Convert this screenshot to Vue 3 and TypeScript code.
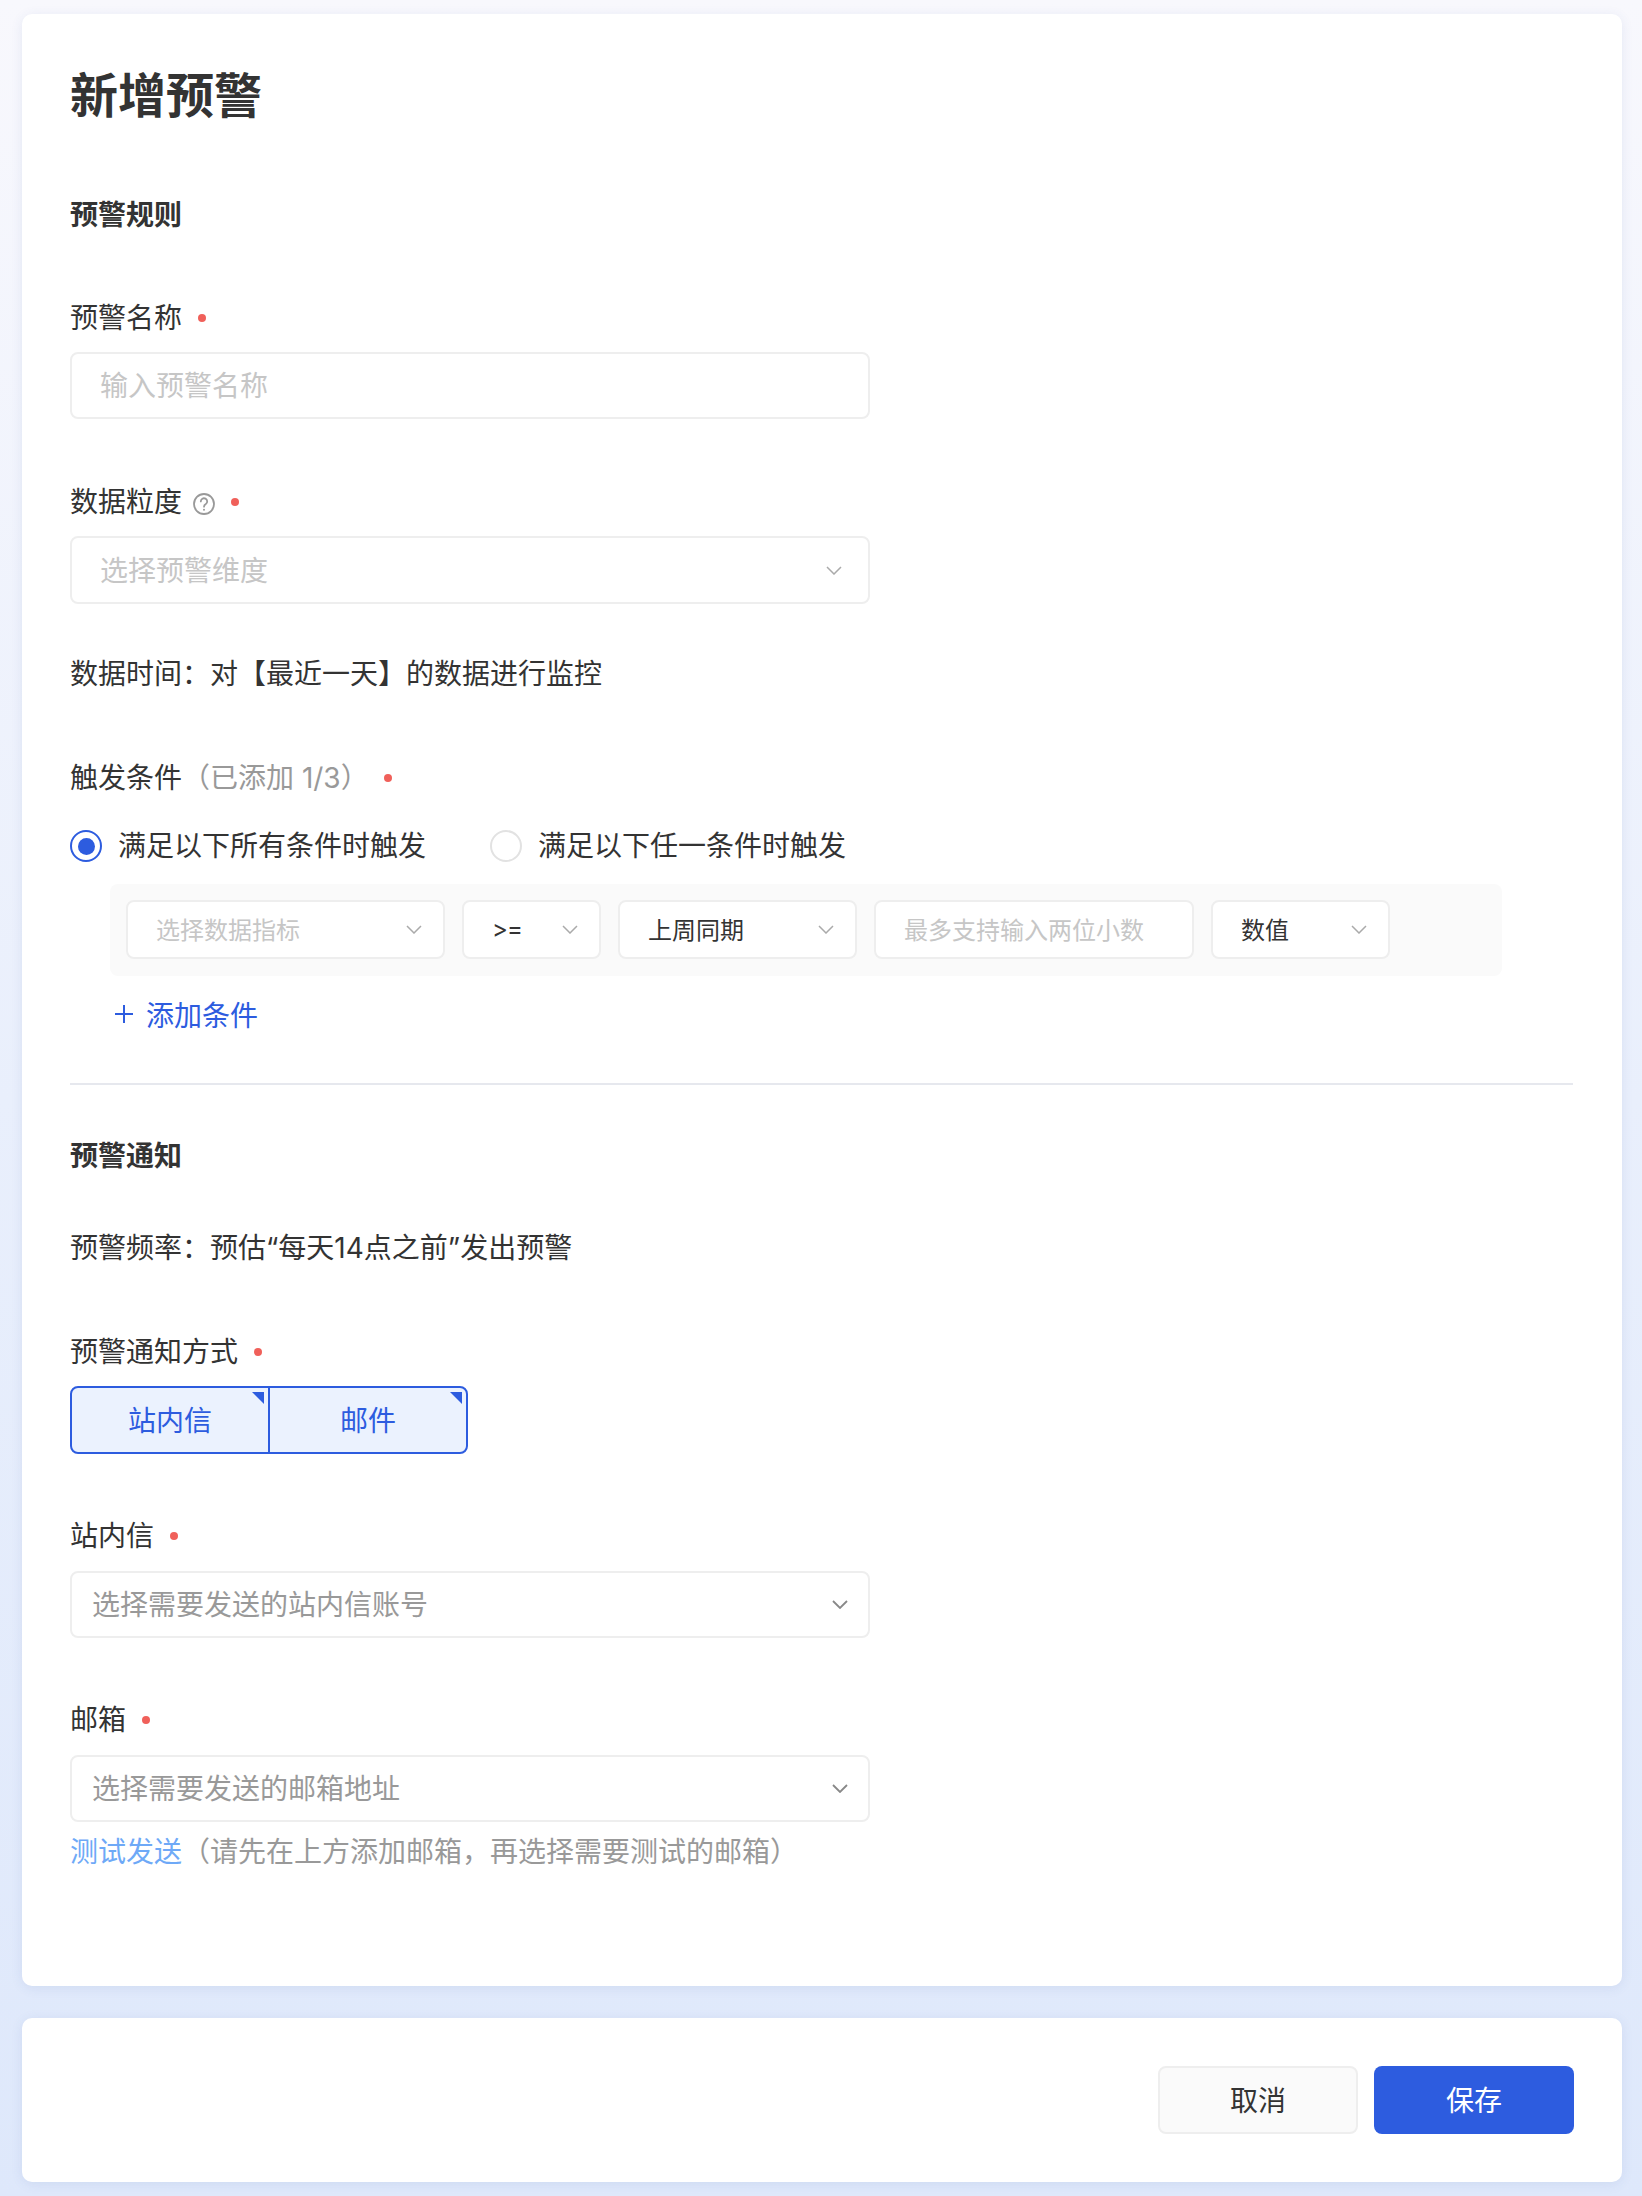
<script setup lang="ts">
interface Condition {
  label: string
  cls: string
  filled: boolean
  chevron: boolean
}
const conditions: Condition[] = [
  { label: '选择数据指标', cls: 'w-metric', filled: false, chevron: true },
  { label: '>=', cls: 'w-op', filled: true, chevron: true },
  { label: '上周同期', cls: 'w-period', filled: true, chevron: true },
  { label: '最多支持输入两位小数', cls: 'w-value', filled: false, chevron: false },
  { label: '数值', cls: 'w-unit', filled: true, chevron: true },
]
</script>

<template>
  <div class="page">
    <main class="card form-card">
      <h1 class="title">新增预警</h1>
      <h2 class="section first-section">预警规则</h2>

      <div class="label m-name">预警名称<i class="dot"></i></div>
      <div class="box box-input m-14"><input class="native" placeholder="输入预警名称" /></div>

      <div class="label m-63">
        数据粒度
        <svg class="help" viewBox="0 0 22 22" fill="none" stroke="#999" stroke-width="1.8">
          <circle cx="11" cy="11" r="10" />
          <path d="M7.8 8.4a3.2 3.2 0 1 1 5 2.7c-1.1.7-1.8 1.3-1.8 2.6" stroke-linecap="round" />
          <circle cx="11" cy="16.8" r="1" fill="#999" stroke="none" />
        </svg>
        <i class="dot"></i>
      </div>
      <div class="box box-large m-14">
        <span class="muted">选择预警维度</span>
        <svg class="chev chev-large" viewBox="0 0 16 9" fill="none"><path d="M1 1l7 7 7-7" /></svg>
      </div>

      <p class="label m-50">数据时间：对【最近一天】的数据进行监控</p>

      <div class="label m-64">触发条件<span class="gray">（已添加 1/3）</span><i class="dot dot-hint"></i></div>

      <div class="radios">
        <label class="radio"><span class="ring on"><span class="core"></span></span>满足以下所有条件时触发</label>
        <label class="radio"><span class="ring"></span>满足以下任一条件时触发</label>
      </div>

      <div class="panel">
        <div
          v-for="c in conditions"
          :key="c.label"
          class="mini"
          :class="c.cls"
        >
          <span :class="c.filled ? 'ink' : 'muted'">{{ c.label }}</span>
          <svg v-if="c.chevron" class="chev" viewBox="0 0 16 9" fill="none"><path d="M1 1l7 7 7-7" /></svg>
        </div>
      </div>

      <div class="add">
        <svg class="plus" viewBox="0 0 18 18" fill="none" stroke="#2d5cdf" stroke-width="2"><path d="M9 0v18M0 9h18" /></svg>
        添加条件
      </div>

      <hr class="rule" />

      <h2 class="section m-51">预警通知</h2>
      <p class="label m-52">预警频率：预估“每天14点之前”发出预警</p>

      <div class="label m-64">预警通知方式<i class="dot"></i></div>
      <div class="toggle">
        <button class="opt">站内信<i class="corner"></i></button>
        <button class="opt">邮件<i class="corner"></i></button>
      </div>

      <div class="label m-62">站内信<i class="dot"></i></div>
      <div class="box box-account m-15">
        <span class="gray">选择需要发送的站内信账号</span>
        <svg class="chev chev-dark" viewBox="0 0 16 9" fill="none"><path d="M1 1l7 7 7-7" /></svg>
      </div>

      <div class="label m-62">邮箱<i class="dot"></i></div>
      <div class="box box-account m-15">
        <span class="gray">选择需要发送的邮箱地址</span>
        <svg class="chev chev-dark" viewBox="0 0 16 9" fill="none"><path d="M1 1l7 7 7-7" /></svg>
      </div>

      <p class="label m-10"><a class="link">测试发送</a><span class="gray">（请先在上方添加邮箱，再选择需要测试的邮箱）</span></p>
    </main>

    <footer class="card actions">
      <button class="btn btn-cancel">取消</button>
      <button class="btn btn-save">保存</button>
    </footer>
  </div>
</template>

<style>
html, body { margin: 0; padding: 0; }
</style>

<style scoped>
.page {
  box-sizing: border-box;
  width: 1642px;
  height: 2196px;
  padding: 14px 20px 14px 22px;
  background: linear-gradient(180deg, #f8f8fd 0%, #e9effc 50%, #dee8fb 100%);
  font-family: Inter, "Noto Sans CJK SC", sans-serif;
  color: #333;
  display: flex;
  flex-direction: column;
  gap: 32px;
}
.card {
  background: #fff;
  border-radius: 10px;
  box-shadow: 0 2px 12px rgba(60, 90, 160, 0.1);
}
.form-card {
  box-sizing: border-box;
  height: 1972px;
  padding: 52px 49px 0 48px;
}
.title {
  margin: 0;
  font-size: 48px;
  line-height: 60px;
  font-weight: 700;
}
.section {
  margin: 0;
  font-size: 28px;
  line-height: 40px;
  font-weight: 700;
}
.first-section { margin-top: 69px; }
.label {
  display: flex;
  align-items: center;
  margin: 0;
  font-size: 28px;
  line-height: 40px;
  height: 40px;
  color: #333;
}
.m-name { margin-top: 63px; }
.m-14 { margin-top: 14px; }
.m-15 { margin-top: 15px; }
.m-63 { margin-top: 63px; }
.m-50 { margin-top: 50px; }
.m-51 { margin-top: 51px; }
.m-64 { margin-top: 64px; }
.m-52 { margin-top: 52px; }
.m-62 { margin-top: 62px; }
.m-10 { margin-top: 10px; }
.dot {
  display: inline-block;
  width: 8px;
  height: 8px;
  border-radius: 50%;
  background: #f0605a;
  margin-left: 16px;
}
.dot-hint { margin-left: 15px; }
.help {
  width: 22px;
  height: 22px;
  margin-left: 11px;
  margin-top: 3px;
}
.gray { color: #999; }
.muted { color: #c6c6c6; }
.ink { color: #333; }
.box {
  box-sizing: border-box;
  width: 800px;
  height: 67px;
  border: 2px solid #eee;
  border-radius: 8px;
  display: flex;
  align-items: center;
  justify-content: space-between;
  font-size: 28px;
  background: #fff;
}
.box > span { padding-bottom: 3px; }
.box-large { height: 68px; }
.box-input, .box-large { padding: 0 26px 0 28px; }
.box-account { padding: 0 20px; }
.native {
  width: 100%;
  border: 0;
  outline: 0;
  padding: 0;
  font: inherit;
  background: transparent;
}
.native::placeholder { color: #c6c6c6; opacity: 1; }
.chev {
  width: 16px;
  height: 9px;
  flex: none;
}
.chev path { stroke: #aaa; stroke-width: 1.5; }
.chev-dark path { stroke: #888; stroke-width: 1.8; }
.radios {
  display: flex;
  gap: 64px;
  margin-top: 28px;
  height: 40px;
  font-size: 28px;
  line-height: 40px;
}
.radio {
  display: flex;
  align-items: center;
  gap: 16px;
}
.ring {
  box-sizing: border-box;
  width: 32px;
  height: 32px;
  border-radius: 50%;
  border: 2px solid #e2e2e2;
  display: flex;
  align-items: center;
  justify-content: center;
}
.ring.on { border-color: #2d5cdf; }
.core {
  width: 17px;
  height: 17px;
  border-radius: 50%;
  background: #2d5cdf;
}
.panel {
  box-sizing: border-box;
  width: 1392px;
  height: 92px;
  margin: 18px 0 0 40px;
  padding: 16px 16px;
  background: #fafafa;
  border-radius: 8px;
  display: flex;
  gap: 17px;
}
.mini {
  box-sizing: border-box;
  height: 59px;
  border: 2px solid #eee;
  border-radius: 8px;
  background: #fff;
  padding: 0 21px 0 28px;
  display: flex;
  align-items: center;
  justify-content: space-between;
  font-size: 24px;
}
.mini > span { padding-bottom: 3px; }
.w-metric { width: 319px; }
.w-op { width: 139px; }
.w-op .ink { letter-spacing: -1px; }
.w-period { width: 239px; }
.w-value { width: 320px; }
.w-unit { width: 179px; }
.add {
  display: flex;
  align-items: center;
  margin: 18px 0 0 45px;
  height: 40px;
  font-size: 28px;
  color: #2d5cdf;
}
.plus {
  width: 18px;
  height: 18px;
  margin-right: 13px;
}
.rule {
  border: 0;
  height: 2px;
  background: #e6e8ee;
  margin: 49px 0 0;
}
.toggle {
  box-sizing: border-box;
  display: flex;
  width: 398px;
  height: 68px;
  margin-top: 14px;
  border: 2px solid #2d5cdf;
  border-radius: 8px;
  background: #ebf2fe;
  overflow: hidden;
}
.opt {
  position: relative;
  box-sizing: border-box;
  flex: 1;
  border: 0;
  padding: 0 0 2px;
  background: transparent;
  color: #2d5cdf;
  font: inherit;
  font-size: 28px;
}
.opt + .opt { border-left: 2px solid #2d5cdf; }
.corner {
  position: absolute;
  top: 4px;
  right: 4px;
  width: 12px;
  height: 12px;
  background: #2d5cdf;
  clip-path: polygon(0 0, 100% 0, 100% 100%);
}
.link { color: #6ea9f7; }
.actions {
  box-sizing: border-box;
  height: 164px;
  padding: 48px;
  display: flex;
  justify-content: flex-end;
  gap: 16px;
}
.btn {
  box-sizing: border-box;
  width: 200px;
  height: 68px;
  border-radius: 8px;
  font: inherit;
  font-size: 28px;
  padding: 0 0 2px;
}
.btn-cancel {
  background: #fafafa;
  border: 2px solid #eee;
  color: #333;
}
.btn-save {
  background: #2d5cdf;
  border: 0;
  color: #fff;
}
</style>
